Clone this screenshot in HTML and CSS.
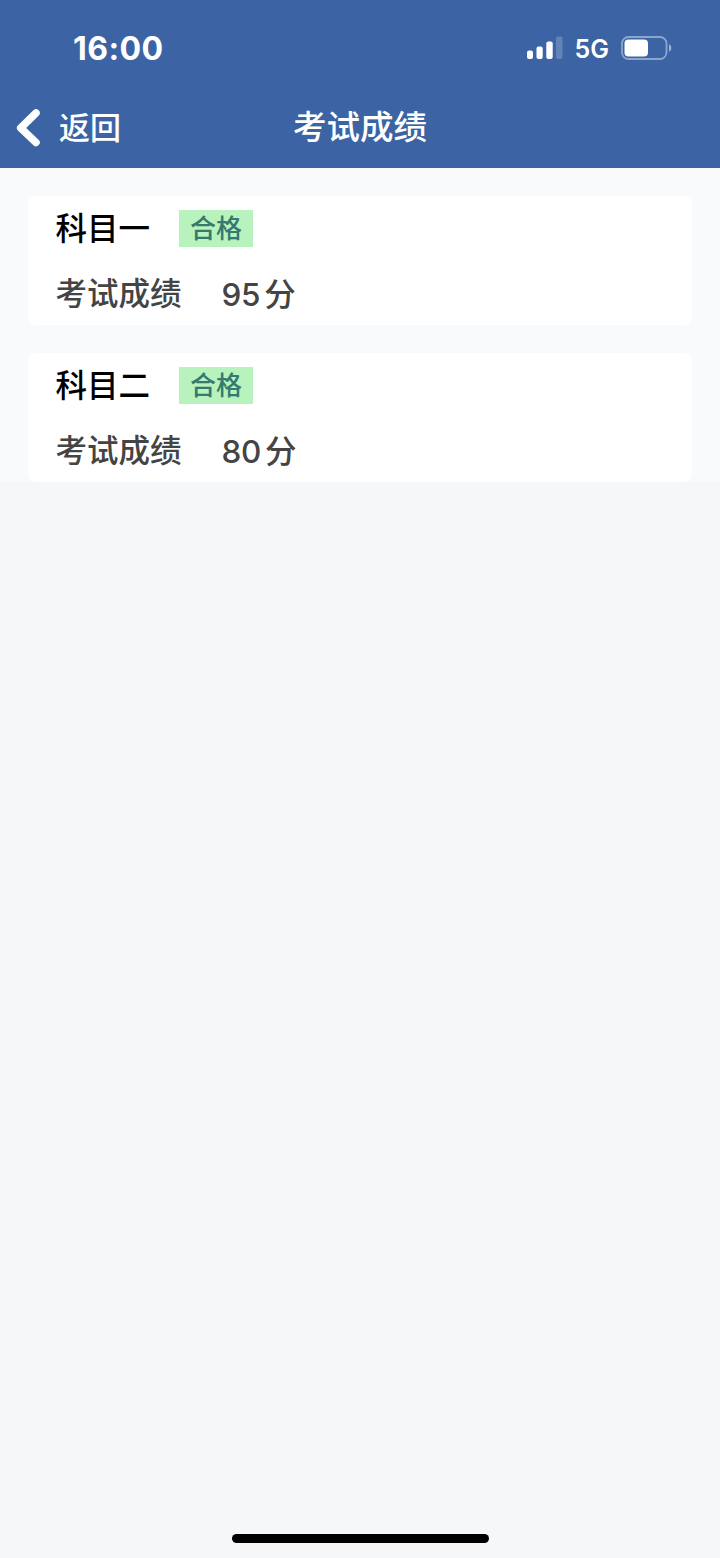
FILE: index.html
```html
<!DOCTYPE html>
<html lang="zh-CN">
<head>
<meta charset="utf-8">
<title>考试成绩</title>
<link rel="stylesheet" href="styles.css">
</head>
<body>
<header class="header">
  <div class="status">
    <span class="time">16:00</span>
    <div class="indicators">
      <svg class="signal" width="36" height="24" viewBox="0 0 36 24"><g fill="#fff"><rect x="0" y="14.5" width="6" height="8.5" rx="2"/><rect x="9.5" y="10.5" width="6.2" height="12.5" rx="2"/><rect x="19.3" y="5.5" width="6.4" height="17.5" rx="2"/><rect x="29" y="0.5" width="6.5" height="22.5" rx="2" opacity=".2"/></g></svg>
      <span class="network">5G</span>
      <svg class="battery" width="51" height="24" viewBox="0 0 51 24"><rect x="1" y="1" width="44.5" height="22" rx="6.5" fill="none" stroke="#fff" stroke-width="1.8" opacity=".42"/><rect x="3.5" y="3.5" width="23.5" height="17" rx="4" fill="#fff"/><path d="M48 8q2.4 1.5 2.4 4T48 16z" fill="#fff" opacity=".5"/></svg>
    </div>
  </div>
  <nav class="nav">
    <a class="back"><svg width="24" height="38" viewBox="0 0 24 38"><path d="M20 4L4.7 19L20 33.5" fill="none" stroke="#fff" stroke-width="7.5" stroke-linecap="round" stroke-linejoin="round"/></svg><span>返回</span></a>
    <h1 class="title">考试成绩</h1>
  </nav>
</header>
<main class="results">
  <section class="card">
    <div class="subject"><h2 class="name">科目一</h2><span class="badge">合格</span></div>
    <div class="score"><span class="label">考试成绩</span><span class="value"><span class="number">95</span>分</span></div>
  </section>
  <section class="card">
    <div class="subject"><h2 class="name">科目二</h2><span class="badge">合格</span></div>
    <div class="score"><span class="label">考试成绩</span><span class="value"><span class="number">80</span>分</span></div>
  </section>
</main>
<div class="home"></div>
</body>
</html>
```
FILE: styles.css
```css
* { box-sizing: border-box; }
body { margin: 0; height: 1558px; display: flex; flex-direction: column; background: #f5f7f9; font-family: Inter, "Noto Sans CJK SC", sans-serif; font-weight: 500; }
.header { height: 168px; background: #3c64a4; color: #fff; }
.status { height: 88px; padding: 8px 48px 0 73px; display: flex; align-items: center; justify-content: space-between; }
.time { padding-top: 1px; font-size: 32px; line-height: 40px; font-weight: 750; letter-spacing: 0.4px; }
.indicators { display: flex; align-items: center; }
.network { margin: 2px 12px 0 12px; font-size: 25px; font-weight: 600; line-height: 30px; }
.nav { height: 80px; display: grid; grid-template-columns: 1fr auto 1fr; align-items: center; padding: 0 16px; }
.back { display: flex; align-items: center; gap: 19px; font-size: 31px; line-height: 40px; }
.title { margin: 0; padding-bottom: 2px; font-size: 33.5px; line-height: 40px; font-weight: 500; }
.results { display: flex; flex-direction: column; gap: 28px; padding: 28px 28px 0; background: #f9fafc; }
.card { height: 129px; border-radius: 8px; background: #fff; padding: 13px 28px 0 27.5px; }
.subject { display: flex; align-items: center; height: 38px; gap: 29px; }
.name { margin: 0; padding-top: 2px; font-size: 31.5px; line-height: 38px; font-weight: 500; color: #000; }
.badge { width: 74px; height: 37px; padding-top: 1px; background: #b8f3bd; color: #35796f; font-size: 26px; line-height: 36px; text-align: center; }
.score { display: flex; align-items: flex-start; gap: 40px; margin-top: 26px; font-size: 31.5px; line-height: 40px; color: #444; }
.label { padding-top: 1px; }
.value { padding-top: 2px; }
.number { margin-right: 4px; font-weight: 540; letter-spacing: -0.3px; }
.home { width: 257px; height: 9px; border-radius: 5px; background: #000; margin: auto auto 15px; }
```
